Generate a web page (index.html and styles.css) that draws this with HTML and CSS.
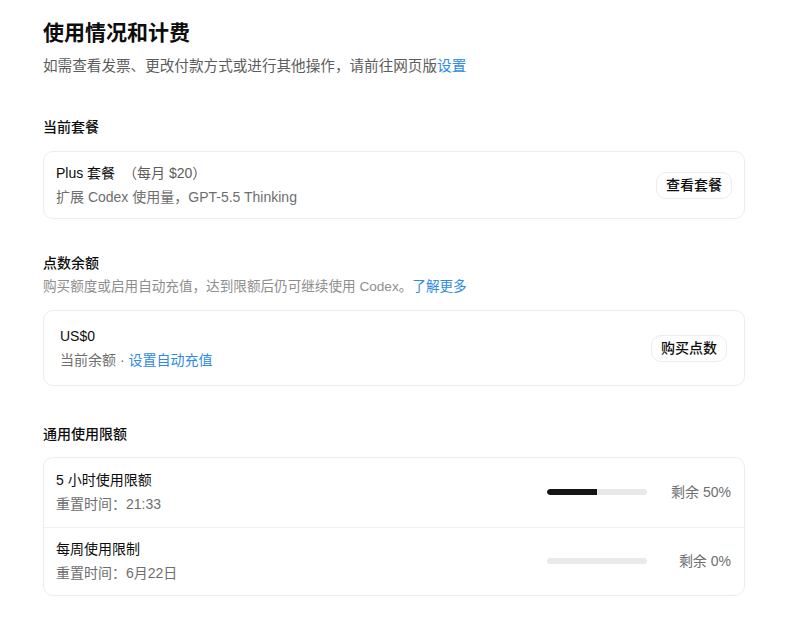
FILE: index.html
```html
<!DOCTYPE html>
<html lang="zh-CN">
<head>
  <meta charset="UTF-8" />
  <meta name="viewport" content="width=device-width, initial-scale=1" />
  <title>使用情况和计费</title>
  <link rel="stylesheet" href="styles.css">
</head>
<body>
  <div class="page">
    <h1 class="page-title">使用情况和计费</h1>
    <p class="page-desc">如需查看发票、更改付款方式或进行其他操作，请前往网页版<a href="#">设置</a></p>

    <section class="section section-plan">
      <h2 class="section-title">当前套餐</h2>
      <div class="card card-plan">
        <div class="card-text">
          <div class="card-main">Plus 套餐 <span class="price">（每月 $20）</span></div>
          <div class="card-sub">扩展 Codex 使用量，GPT-5.5 Thinking</div>
        </div>
        <button class="btn">查看套餐</button>
      </div>
    </section>

    <section class="section section-credits">
      <h2 class="section-title">点数余额</h2>
      <p class="section-desc">购买额度或启用自动充值，达到限额后仍可继续使用 Codex。<a href="#">了解更多</a></p>
      <div class="card card-credits">
        <div class="card-text">
          <div class="card-main">US$0</div>
          <div class="card-sub">当前余额 · <a href="#">设置自动充值</a></div>
        </div>
        <button class="btn">购买点数</button>
      </div>
    </section>

    <section class="section section-limits">
      <h2 class="section-title">通用使用限额</h2>
      <div class="card card-limits">
        <div class="limit-row">
          <div class="card-text">
            <div class="card-main">5 小时使用限额</div>
            <div class="card-sub">重置时间：21:33</div>
          </div>
          <div class="meter">
            <div class="bar"><div class="bar-fill" style="width: 50%"></div></div>
            <span class="pct">剩余 50%</span>
          </div>
        </div>
        <div class="limit-row">
          <div class="card-text">
            <div class="card-main">每周使用限制</div>
            <div class="card-sub">重置时间：6月22日</div>
          </div>
          <div class="meter">
            <div class="bar"><div class="bar-fill" style="width: 0%"></div></div>
            <span class="pct">剩余 0%</span>
          </div>
        </div>
      </div>
    </section>
  </div>
</body>
</html>
```

FILE: styles.css
```css
body {
  margin: 0;
  background: #ffffff;
  color: #0d0d0d;
  font-family: "Liberation Sans", "Noto Sans CJK SC", sans-serif;
}
a {
  color: #2e8ae6;
  text-decoration: none;
}
.page {
  width: 702px;
  margin-left: 43px;
  padding-top: 19px;
}
.page-title {
  margin: 0;
  font-size: 21px;
  line-height: 28px;
  font-weight: 600;
}
.page-desc {
  margin: 8px 0 0;
  font-size: 14.6px;
  line-height: 22px;
  color: #5d5d5d;
}
.section-title {
  margin: 0;
  font-size: 14px;
  line-height: 20px;
  font-weight: 500;
}
.section-plan {
  margin-top: 40px;
}
.section-credits {
  margin-top: 34px;
}
.section-limits {
  margin-top: 38px;
}
.section-desc {
  margin: 4px 0 0;
  font-size: 13.6px;
  line-height: 20px;
  color: #8e8e8e;
}
.card {
  border: 1px solid #ececec;
  border-radius: 10px;
  margin-top: 13px;
}
.card-plan,
.card-credits {
  display: flex;
  align-items: center;
  justify-content: space-between;
}
.card-plan {
  margin-top: 14px;
  padding: 10px 12px;
}
.card-credits {
  padding: 14px 17px 14px 16px;
}
.card-text {
  display: flex;
  flex-direction: column;
  gap: 2px;
}
.card-main {
  font-size: 14px;
  line-height: 22px;
  color: #0d0d0d;
}
.price {
  color: #5d5d5d;
  margin-left: 4px;
}
.card-sub {
  font-size: 14px;
  line-height: 22px;
  color: #6e6e6e;
}
.btn {
  font-family: inherit;
  font-size: 14px;
  font-weight: 500;
  color: #0d0d0d;
  background: #ffffff;
  border: 1px solid #ececec;
  border-radius: 10px;
  padding: 0 9px;
  height: 27px;
  line-height: 25px;
}
.limit-row {
  display: flex;
  align-items: center;
  justify-content: space-between;
  padding: 11px 13px 12px 12px;
}
.limit-row + .limit-row {
  border-top: 1px solid #f0f0f0;
  padding-top: 10px;
  padding-bottom: 11px;
}
.meter {
  display: flex;
  align-items: center;
  gap: 24px;
}
.bar {
  width: 100px;
  height: 6px;
  border-radius: 3px;
  background: #e9e9e9;
  overflow: hidden;
}
.bar-fill {
  height: 100%;
  background: #141414;
  border-radius: 3px 0 0 3px;
}
.pct {
  width: 60px;
  text-align: right;
  font-size: 14px;
  line-height: 22px;
  color: #6e6e6e;
}
```
